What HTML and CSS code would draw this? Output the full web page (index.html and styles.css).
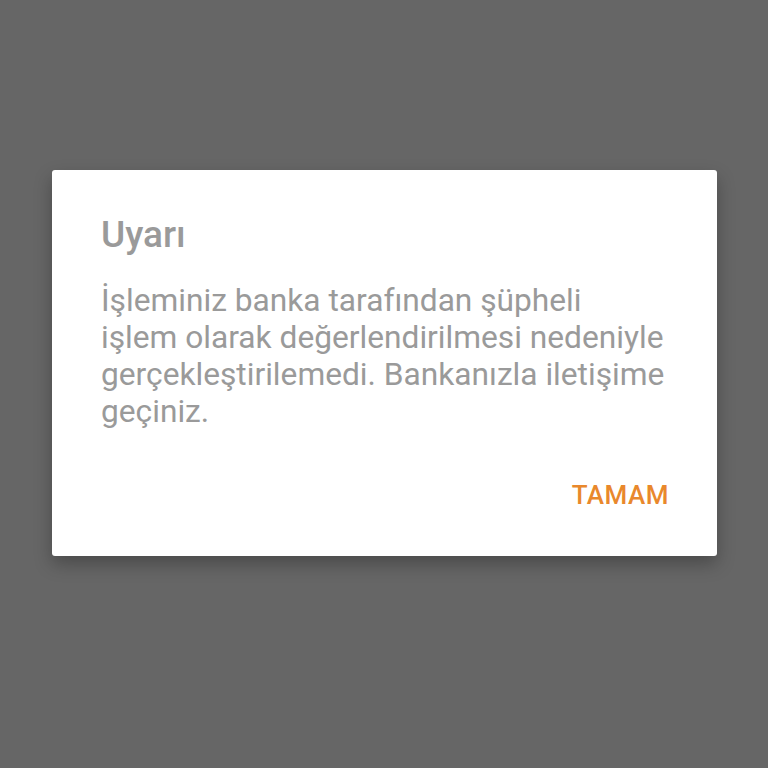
FILE: index.html
```html
<!DOCTYPE html>
<html lang="tr">
<head>
<meta charset="utf-8">
<link rel="stylesheet" href="styles.css">
</head>
<body>
<div class="overlay">
  <div class="dialog">
    <h1 class="title">Uyarı</h1>
    <p class="message">İşleminiz banka tarafından şüpheli<br>işlem olarak değerlendirilmesi nedeniyle<br>gerçekleştirilemedi. Bankanızla iletişime<br>geçiniz.</p>
    <div class="actions">
      <button class="btn">TAMAM</button>
    </div>
  </div>
</div>
</body>
</html>
```
FILE: styles.css
```css
html, body {
  margin: 0;
  padding: 0;
  width: 768px;
  height: 768px;
  background: #666666;
  font-family: Roboto, "Noto Sans", sans-serif;
}
.overlay {
  width: 768px;
  height: 768px;
  display: flex;
  justify-content: center;
  align-items: flex-start;
  padding-top: 170px;
  padding-left: 1px;
  box-sizing: border-box;
}
.dialog {
  width: 665px;
  height: 386px;
  box-sizing: border-box;
  background: #ffffff;
  border-radius: 3px;
  box-shadow: 0 8px 18px rgba(0,0,0,0.28);
  padding: 0 48px 0 49px;
  display: flex;
  flex-direction: column;
}
.title {
  margin: 43px 0 0 0;
  font-size: 37px;
  font-weight: 500;
  line-height: 44px;
  color: #9a9a9a;
}
.message {
  margin: 25px 0 0 0;
  font-size: 31.7px;
  line-height: 37px;
  color: #9a9a9a;
  font-weight: 400;
  white-space: nowrap;
}
.actions {
  display: flex;
  justify-content: flex-end;
  margin-top: 50px;
}
.btn {
  border: none;
  background: none;
  padding: 0;
  font-family: Roboto, sans-serif;
  font-size: 26px;
  line-height: 30px;
  font-weight: 500;
  color: #e9882c;
  letter-spacing: 0.5px;
}
```
